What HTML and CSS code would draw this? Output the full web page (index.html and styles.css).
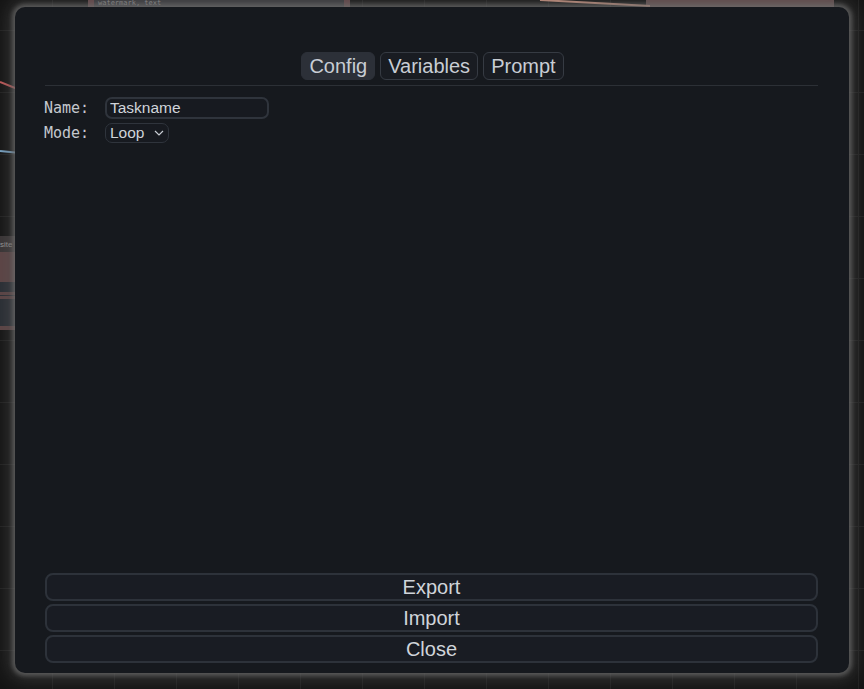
FILE: index.html
```html
<!DOCTYPE html>
<html>
<head>
<meta charset="utf-8">
<link rel="stylesheet" href="styles.css">
</head>
<body>
<div class="canvas">
  <div class="node node-a"><span>watermark, text</span></div>
  <div class="node node-b"></div>
  <div class="node node-c"><span>site</span></div>
  <div class="strip strip-1"></div>
  <div class="strip strip-2"></div>
  <div class="strip strip-3"></div>
  <svg class="wires" width="864" height="689" viewBox="0 0 864 689">
    <path d="M0 82 L20 90" stroke="#c25a5a" stroke-width="2" fill="none"/>
    <path d="M0 151 L20 153" stroke="#7aa6c8" stroke-width="2" fill="none"/>
    <path d="M540 0 L650 6" stroke="#d59a86" stroke-width="2" fill="none"/>
  </svg>
</div>
<div class="modal">
  <div class="tabs">
    <button class="tab active">Config</button>
    <button class="tab">Variables</button>
    <button class="tab">Prompt</button>
  </div>
  <div class="rule"></div>
  <div class="form">
    <div class="row">
      <label class="lbl">Name:</label>
      <input class="txt" type="text" value="Taskname">
    </div>
    <div class="row">
      <label class="lbl">Mode:</label>
      <div class="select">Loop
        <svg class="chev" width="10" height="6" viewBox="0 0 10 6"><path d="M1 1 L5 5 L9 1" stroke="#c8cdd4" stroke-width="1.2" fill="none"/></svg>
      </div>
    </div>
  </div>
  <div class="spacer"></div>
  <div class="actions">
    <button class="act">Export</button>
    <button class="act">Import</button>
    <button class="act">Close</button>
  </div>
</div>
</body>
</html>
```
FILE: styles.css
```css
* { box-sizing: border-box; }
html, body { margin: 0; padding: 0; }
body {
  width: 864px;
  height: 689px;
  overflow: hidden;
  position: relative;
  background-color: #151515;
  background-image:
    linear-gradient(#222 1px, transparent 1px),
    linear-gradient(90deg, #222 1px, transparent 1px);
  background-size: 62px 62px;
  background-position: -10px 30px;
  font-family: "Liberation Sans", Arial, sans-serif;
}
.canvas { position: absolute; inset: 0; }
.node { position: absolute; background: #4a3a3d; }
.node span {
  position: absolute;
  font-family: "DejaVu Sans Mono", monospace;
  font-size: 7px;
  color: #9a9a9a;
}
.node-a { left: 88px; top: -10px; width: 262px; height: 17px; background: #3b3b40; border-left: 6px solid #6b4a4c; border-right: 6px solid #6b4a4c; }
.node-a span { left: 4px; top: 9px; }
.node-b { left: 646px; top: -10px; width: 188px; height: 17px; background: #6a5152; }
.node-c { left: 0; top: 236px; width: 20px; height: 20px; background: #3a3536; }
.node-c span { left: 0; top: 4px; font-size: 8px; font-family: "Liberation Sans", sans-serif; }
.strip { position: absolute; left: 0; width: 20px; }
.strip-1 { top: 252px; height: 30px; background: #5e4546; }
.strip-2 { top: 282px; height: 48px; background: #2a2e35; border-top: 10px solid #2a2e35; box-shadow: inset 0 14px 0 -11px #5e4546, inset 0 -4px 0 #5e4546; }
.strip-3 { top: 296px; height: 3px; background: #5e4546; }
.wires { position: absolute; left: 0; top: 0; }

.modal {
  position: absolute;
  left: 15px;
  top: 7px;
  width: 834px;
  height: 666px;
  background: #16191e;
  border-radius: 10px;
  box-shadow: 0 0 4px 3px rgba(115,115,115,0.6), 0 0 16px 7px rgba(80,80,80,0.5);
  padding: 45px 31px 10px 30px;
  display: flex;
  flex-direction: column;
}
.tabs {
  display: flex;
  justify-content: center;
  gap: 5px;
  padding-left: 2px;
}
.tab {
  font-family: "Liberation Sans", Arial, sans-serif;
  font-size: 20px;
  color: #c8cdd4;
  background: #191c22;
  border: 1px solid #363b43;
  border-radius: 6px;
  height: 28px;
  padding: 0 7px;
  line-height: 27px;
  margin: 0;
}
.tab.active { background: #2c3038; border-color: #2c3038; }
.rule {
  height: 1px;
  background: #2c3036;
  margin-top: 5px;
}
.form {
  display: flex;
  flex-direction: column;
  gap: 4px;
  margin-top: 11px;
}
.row { display: flex; align-items: center; }
.lbl {
  font-family: "DejaVu Sans Mono", monospace;
  font-size: 15px;
  color: #c4c8ce;
  width: 61px;
  margin-left: -1px;
}
.txt {
  width: 164px;
  height: 22px;
  background: #171a20;
  border: 2px solid #2f343c;
  border-radius: 7px;
  color: #d0d4da;
  font-family: "Liberation Sans", Arial, sans-serif;
  font-size: 15.5px;
  padding: 0 3px;
  margin: 0;
  outline: none;
}
.select {
  width: 64px;
  height: 20px;
  border: 1px solid #2f343c;
  border-radius: 7px;
  background: #171a20;
  color: #d0d4da;
  font-size: 15.5px;
  line-height: 18px;
  padding-left: 4px;
  display: flex;
  align-items: center;
  position: relative;
}
.chev { position: absolute; right: 4px; top: 6px; }
.spacer { flex: 1; }
.actions {
  display: flex;
  flex-direction: column;
  gap: 3px;
}
.act {
  height: 28px;
  width: 100%;
  margin: 0;
  background: #191c23;
  border: 2px solid #2d323a;
  border-radius: 8px;
  color: #d0d4da;
  font-family: "Liberation Sans", Arial, sans-serif;
  font-size: 20px;
  line-height: 24px;
  padding: 0;
}
```
